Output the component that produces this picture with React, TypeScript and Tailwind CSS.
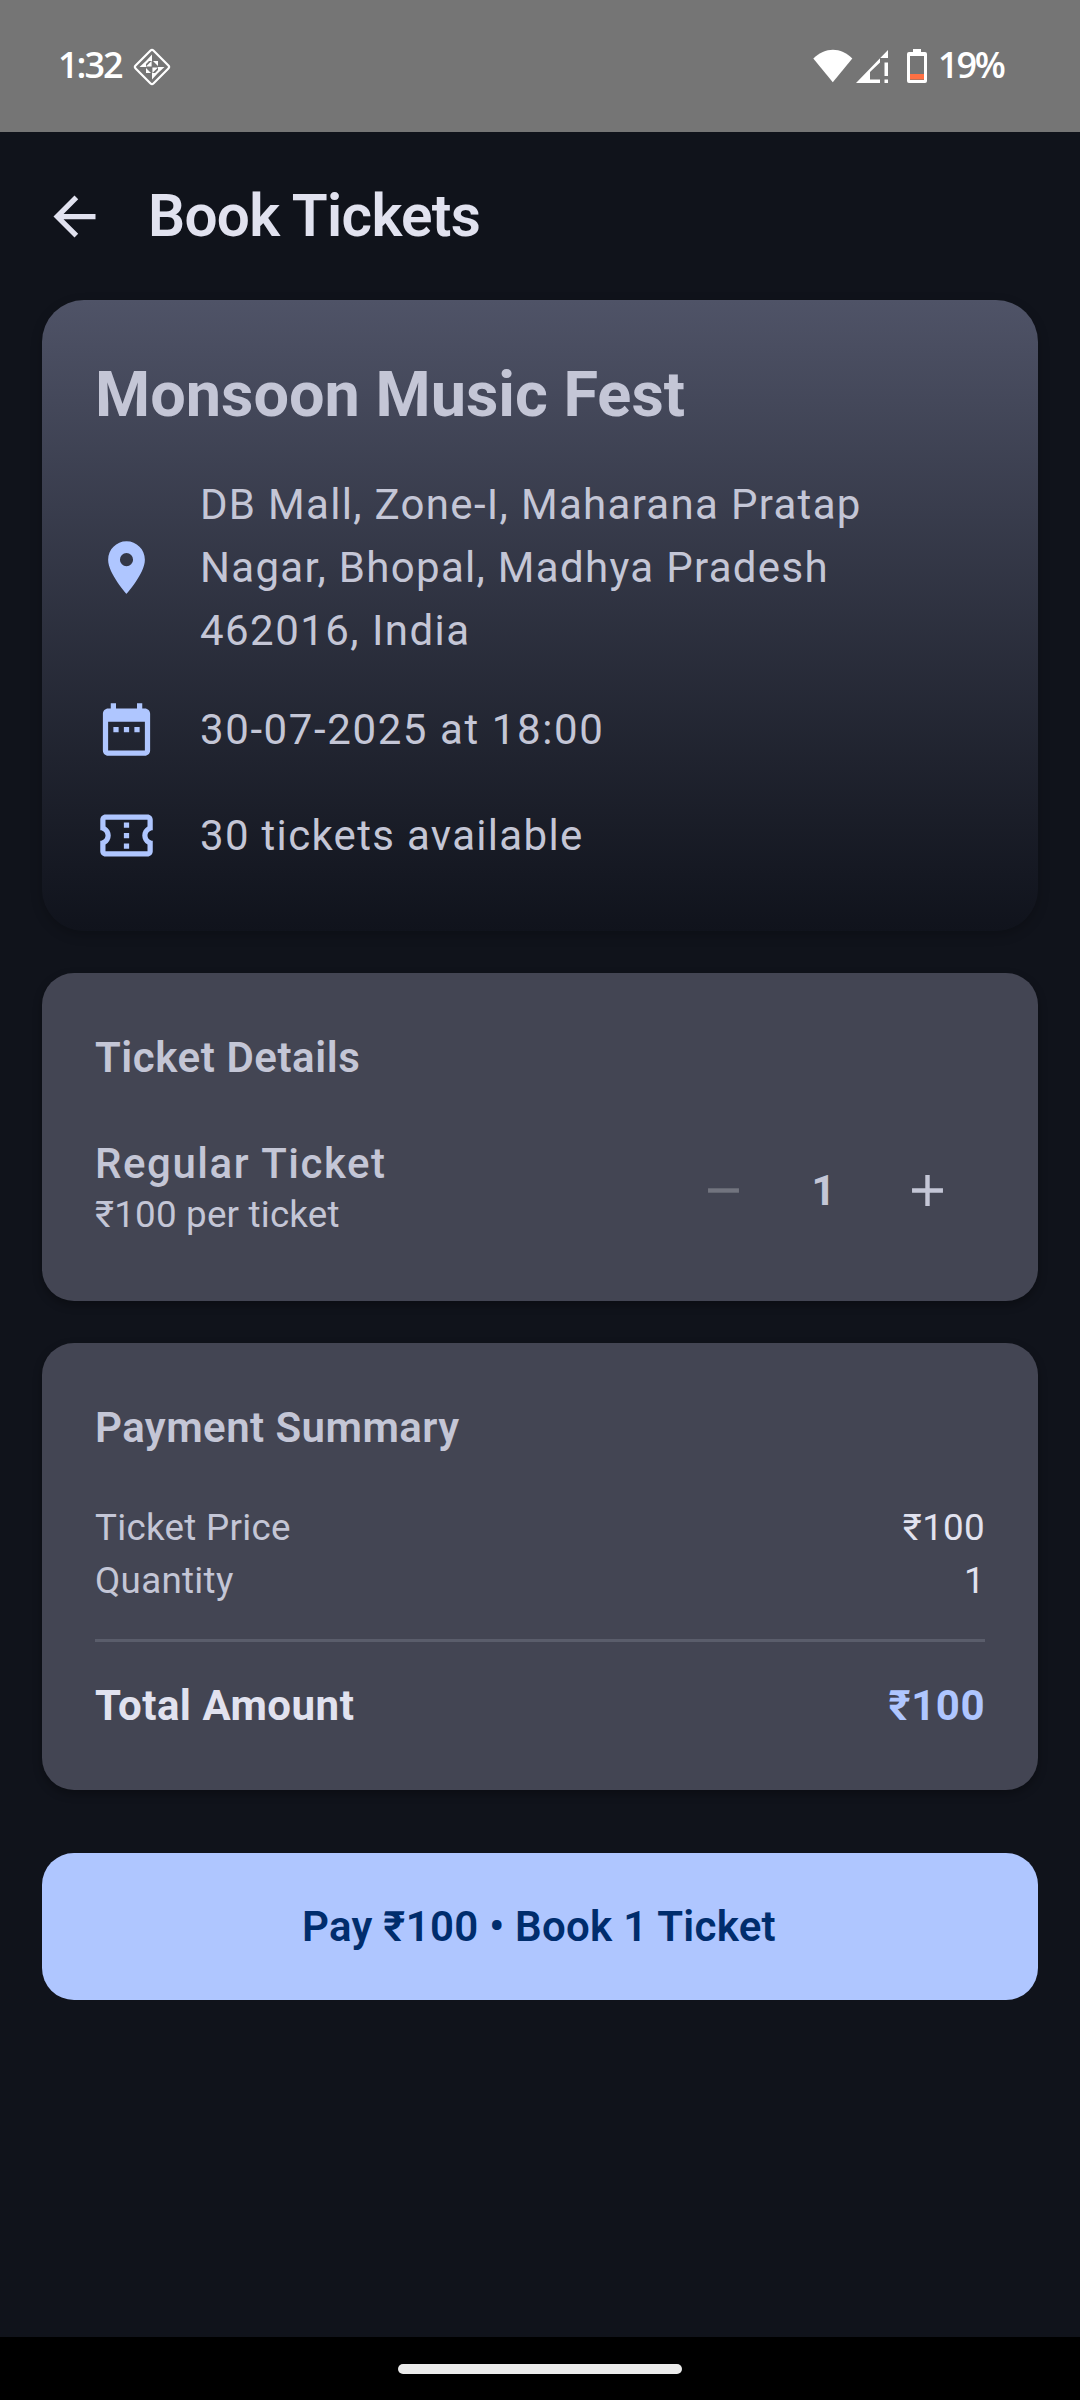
import type { ReactNode } from "react";

function Icon({ size, className, children }: { size: string; className?: string; children: ReactNode }) {
  return (
    <svg viewBox="0 0 24 24" fill="currentColor" className={`${size} shrink-0 ${className ?? ""}`}>
      {children}
    </svg>
  );
}

function StatusBar() {
  return (
    <header className="flex h-[132px] items-center bg-[#757575] pl-[58px] text-white">
      <span className="-mt-[2px] w-[75px] font-['Open_Sans',sans-serif] text-[36px] font-semibold leading-[42px] tracking-[-2px]">1:32</span>
      <svg viewBox="0 0 38 38" className="mt-[2px] size-[38px]" fill="none">
        <rect x="6.4" y="6.4" width="25.2" height="25.2" rx="2" stroke="white" strokeWidth="2.2" transform="rotate(45 19 19)" />
        <path d="M19 6.500V13h-6zM6.500 19H13v-6zM31.500 19H25v6zM19 31.500V25h6z" fill="white" />
        <path d="M18.600 13v5.600H13zM19.400 25v-5.600H25zM20 13h5v5zM13 20v5h5z" fill="white" />
        <path d="M13 13h3l-3 3zM25 25h-3l3-3z" fill="white" />
      </svg>
      <svg viewBox="0 0 40 34" className="ml-[642px] h-[34px] w-[40px]" fill="white">
        <path d="M.3 9.500C12 -2.300 28 -2.300 39.300 9.500L19.800 33.200z" />
      </svg>
      <svg viewBox="0 0 32 33" className="ml-[3px] h-[33px] w-[32px]" fill="white">
        <path d="M32 0v8h-8v4.500l-10 9.500v7.500h10V33H0z" />
        <path d="M28.500 12.500H32v13.500h-3.500zM28.500 29.500H32V33h-3.500z" />
      </svg>
      <svg viewBox="0 0 20 34" className="ml-[19px] h-[34px] w-[20px]">
        <path fill="white" fillRule="evenodd" d="M6 0h8v3h4q2 0 2 2v27q0 2-2 2H2q-2 0-2-2V5q0-2 2-2h4zM3 7v24h14V7z" />
        <path fill="#ff7043" d="M3 25h14v5.500H3z" />
      </svg>
      <span className="-mt-[2px] ml-[11px] font-['Open_Sans',sans-serif] text-[36px] font-semibold leading-[42px] tracking-[-2.2px]">19%</span>
    </header>
  );
}

function InfoRow({ icon, children }: { icon: ReactNode; children: ReactNode }) {
  return (
    <div className="flex items-center gap-[42px]">
      <Icon size="size-[63px]" className="text-[#afc6ff]">{icon}</Icon>
      <p className="text-[42px] leading-[63px] tracking-[1.31px]">{children}</p>
    </div>
  );
}

function SummaryRow({ label, value }: { label: string; value: string }) {
  return (
    <div className="flex justify-between text-[36.75px] leading-[53px] tracking-[0.3px]">
      <span>{label}</span>
      <span className="text-[#e1e2ef]">{value}</span>
    </div>
  );
}

export default function App() {
  return (
    <div className="flex h-[2400px] w-[1080px] flex-col bg-[#10131b] font-['Roboto',sans-serif] text-[#c4c6d6]">
      <StatusBar />
      <div className="flex h-[168px] items-center gap-[42px] pl-[43px] text-[#e1e2ef]">
        <Icon size="size-[63px]">
          <path d="M20 11H7.830l5.590-5.590L12 4l-8 8 8 8 1.410-1.410L7.830 13H20v-2z" />
        </Icon>
        <h1 className="text-[58.5px] font-semibold leading-[74px] tracking-[-0.7px]">Book Tickets</h1>
      </div>
      <main className="flex flex-1 flex-col px-[42px]">
        <section className="h-[631px] rounded-[42px] bg-linear-to-b from-[#4f5367] to-[#10131c] px-[53px] pt-[53px] shadow-[0_4px_12px_rgba(0,0,0,0.22)]">
          <h2 className="text-[63px] font-bold leading-[84px]">Monsoon Music Fest</h2>
          <div className="mt-[36px] flex flex-col">
            <InfoRow icon={<path d="M12 2C8.130 2 5 5.130 5 9c0 5.250 7 13 7 13s7-7.750 7-13c0-3.870-3.130-7-7-7zm0 9.500a2.500 2.500 0 0 1 0-5 2.500 2.500 0 0 1 0 5z" />}>
              DB Mall, Zone-I, Maharana Pratap<br />Nagar, Bhopal, Madhya Pradesh<br />
              <span className="tracking-[1.45px]">462016, India</span>
            </InfoRow>
            <div className="mt-[36px]">
              <InfoRow icon={<path d="M9 11H7v2h2v-2zm4 0h-2v2h2v-2zm4 0h-2v2h2v-2zm2-7h-1V2h-2v2H8V2H6v2H5c-1.110 0-1.990.9-1.990 2L3 20c0 1.100.890 2 2 2h14c1.100 0 2-.9 2-2V6c0-1.100-.9-2-2-2zm0 16H5V9h14v11z" />}>
                <span className="tracking-[1.6px]">30-07-2025 at 18:00</span>
              </InfoRow>
            </div>
            <div className="mt-[43px]">
              <InfoRow icon={<path d="M22 10V6c0-1.110-.9-2-2-2H4c-1.100 0-1.990.890-1.990 2v4c1.100 0 1.990.9 1.990 2s-.890 2-2 2v4c0 1.100.9 2 2 2h16c1.100 0 2-.9 2-2v-4c-1.100 0-2-.9-2-2s.9-2 2-2zm-2-1.460c-1.190.690-2 1.990-2 3.460s.810 2.770 2 3.460V18H4v-2.540c1.190-.690 2-1.990 2-3.460 0-1.480-.8-2.770-1.990-3.460L4 6h16v2.540zM11 15h2v2h-2zm0-4h2v2h-2zm0-4h2v2h-2z" />}>
                30 tickets available
              </InfoRow>
            </div>
          </div>
        </section>
        <section className="mt-[42px] h-[328px] rounded-[32px] bg-[#434553] px-[53px] pt-[53px] shadow-[0_4px_10px_rgba(0,0,0,0.3)]">
          <h2 className="text-[42px] font-semibold leading-[63px] tracking-[0.55px]">Ticket Details</h2>
          <div className="mt-[43px] flex items-center justify-between">
            <div className="h-[116px]">
              <p className="text-[42px] font-medium leading-[63px] tracking-[1.55px]">Regular Ticket</p>
              <p className="-mt-[6px] text-[36.75px] leading-[52px] tracking-[0.2px]">₹100 per ticket</p>
            </div>
            <div className="flex items-center pr-[31px]">
              <Icon size="size-[53px]" className="text-[#72747f]">
                <path d="M19 13H5v-2h14v2z" />
              </Icon>
              <span className="w-[151px] pr-[4px] text-center text-[42px] font-bold leading-[63px]">1</span>
              <Icon size="size-[53px]">
                <path d="M19 13h-6v6h-2v-6H5v-2h6V5h2v6h6v2z" />
              </Icon>
            </div>
          </div>
        </section>
        <section className="mt-[42px] h-[447px] rounded-[32px] bg-[#434553] px-[53px] pt-[53px] shadow-[0_4px_10px_rgba(0,0,0,0.3)]">
          <h2 className="text-[42px] font-semibold leading-[63px] tracking-[0.45px]">Payment Summary</h2>
          <div className="mt-[42px]">
            <SummaryRow label="Ticket Price" value="₹100" />
            <SummaryRow label="Quantity" value="1" />
          </div>
          <div className="mt-[32px] h-[3px] bg-[#5a5d6b]" />
          <div className="mt-[32px] flex justify-between text-[42px] font-bold leading-[63px] tracking-[0.5px]">
            <span className="text-[#e1e2ef]">Total Amount</span>
            <span className="text-[#afc6ff]">₹100</span>
          </div>
        </section>
        <button className="mt-[63px] h-[147px] rounded-[32px] bg-[#afc6ff] pr-[2px] text-[42px] font-semibold tracking-[0.28px] text-[#002d6d]">Pay ₹100 • Book 1 Ticket</button>
      </main>
      <footer className="flex h-[63px] justify-center bg-black pt-[27px]">
        <div className="h-[10px] w-[284px] rounded-full bg-[#ebebeb]" />
      </footer>
    </div>
  );
}
